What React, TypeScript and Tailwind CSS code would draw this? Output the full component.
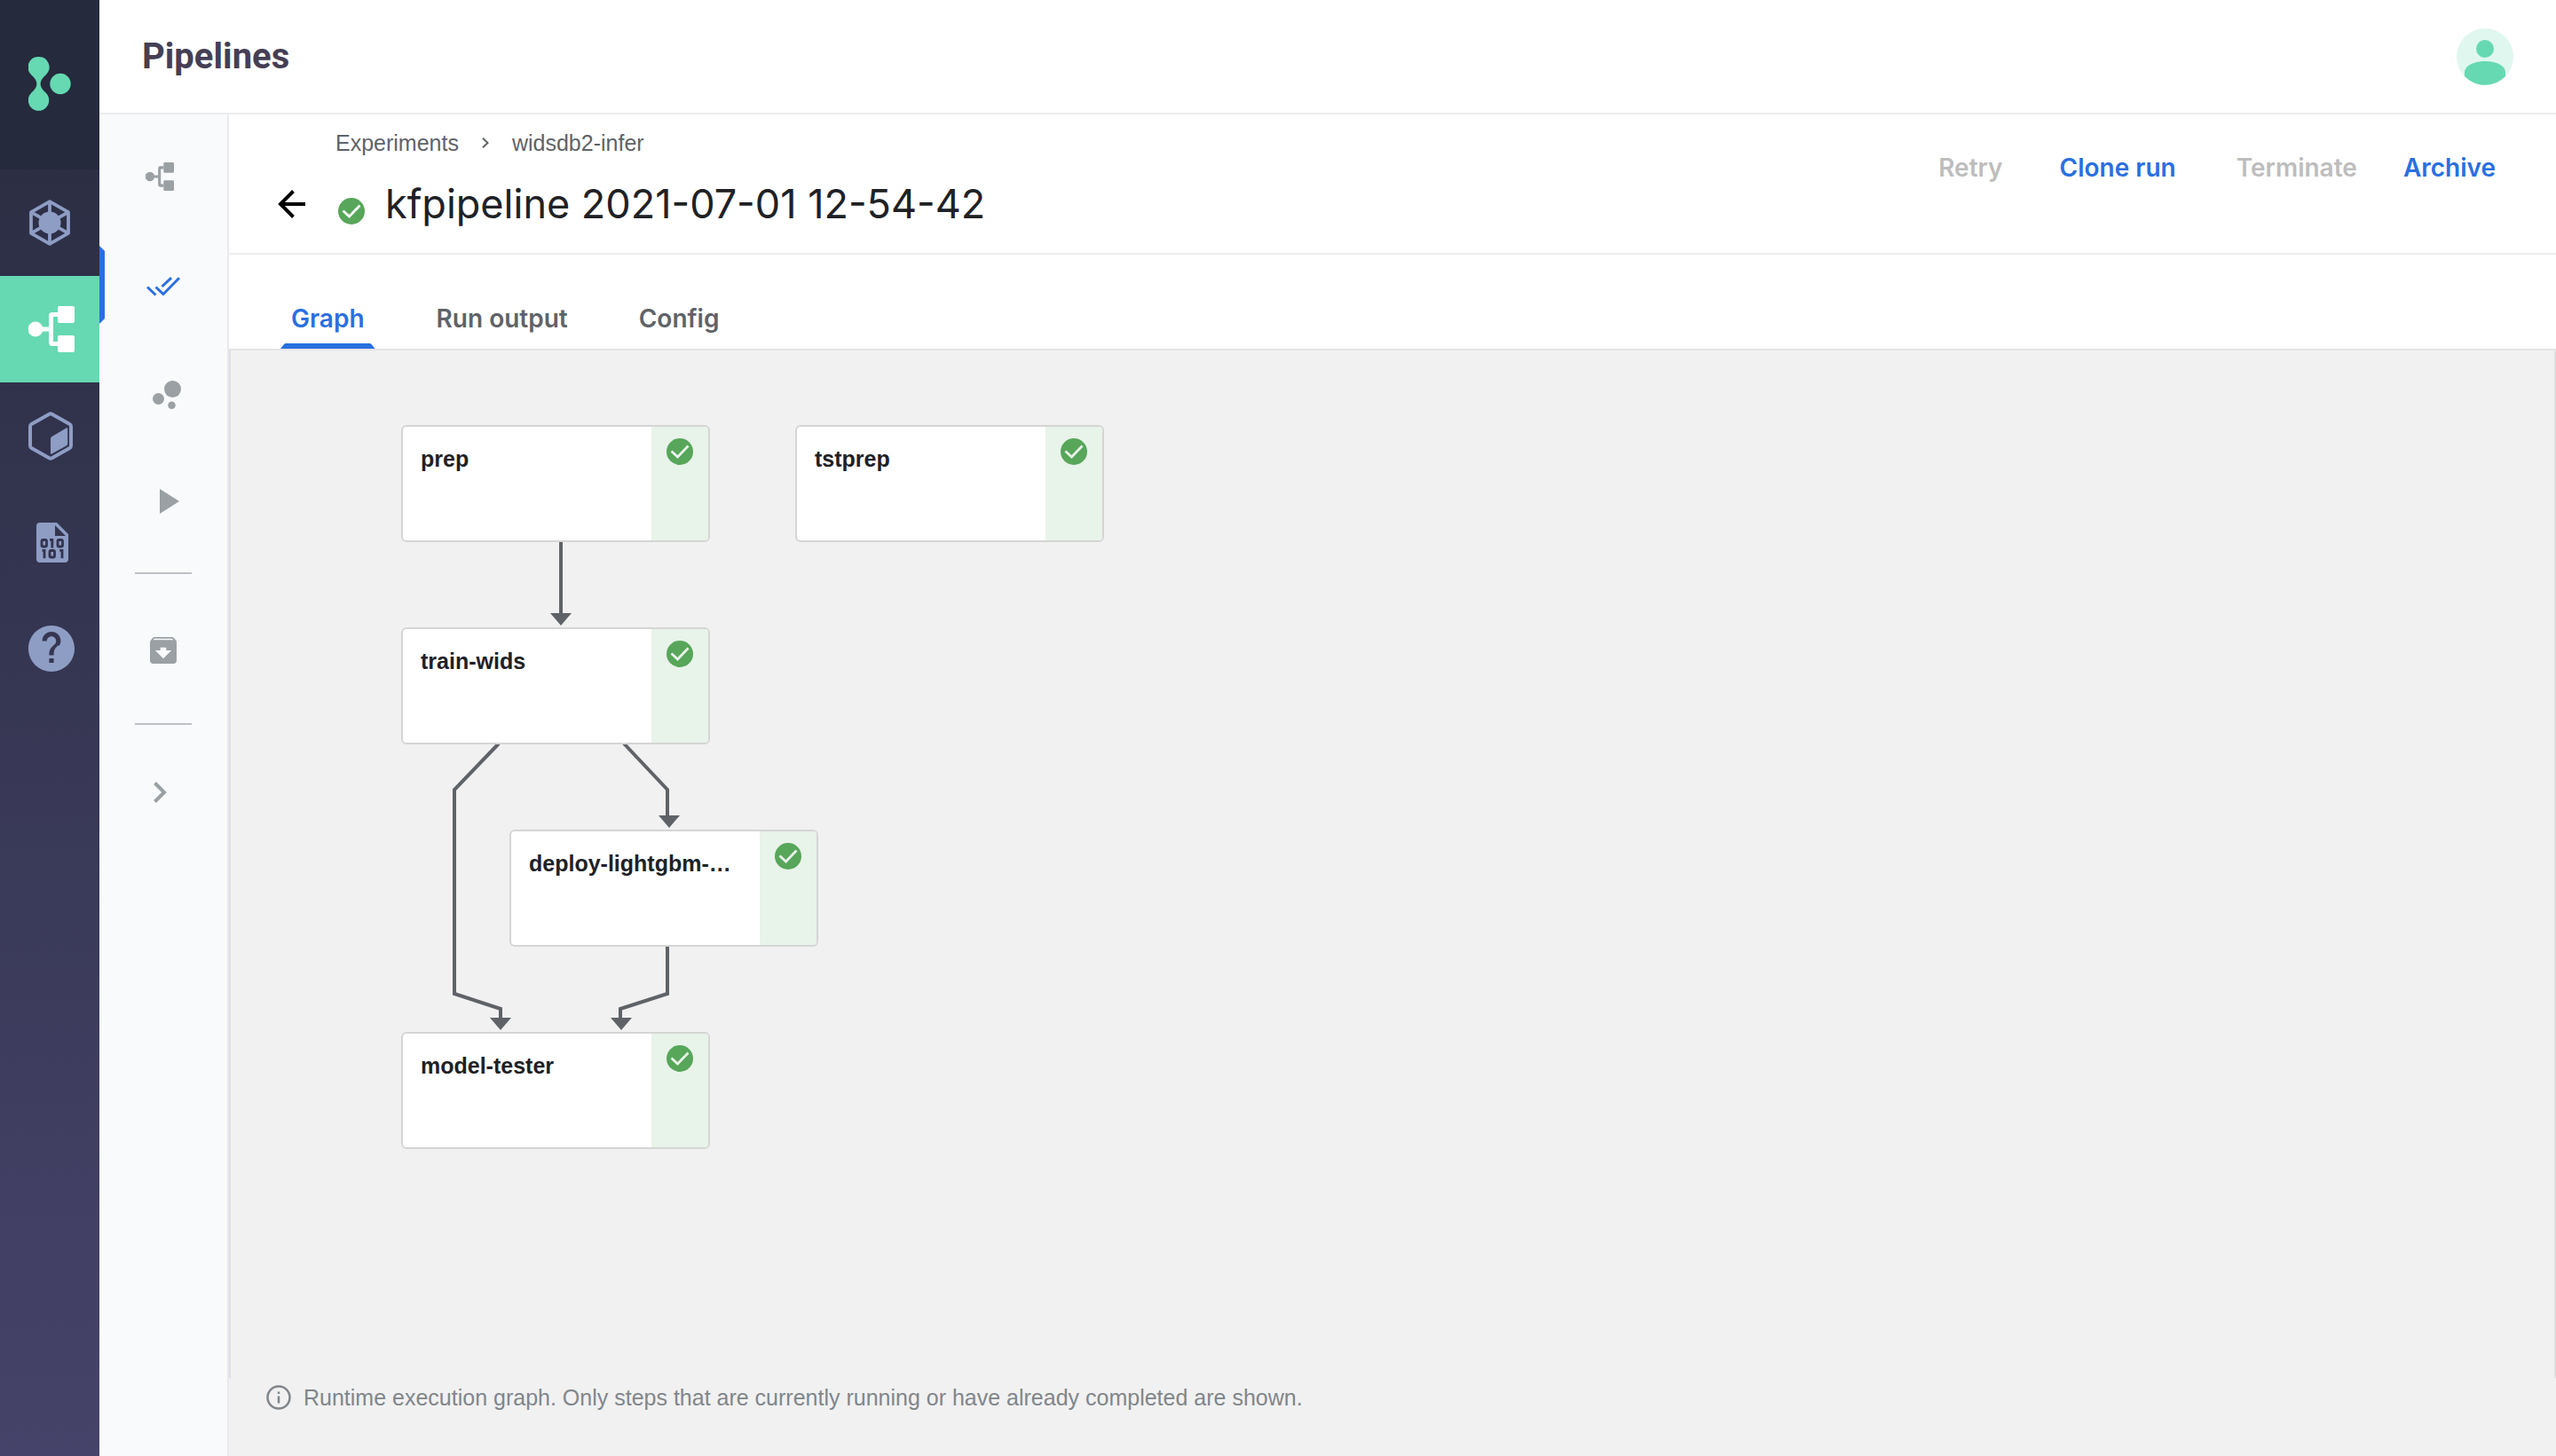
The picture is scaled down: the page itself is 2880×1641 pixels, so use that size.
import React from "react";

const helv = "font-['Liberation_Sans',Arial,sans-serif]";

function Flow({ className }: { className: string }) {
  return (
    <svg viewBox="0 0 52 52" className={className} fill="currentColor" aria-hidden="true">
      <circle cx="8" cy="26" r="8.5" />
      <path d="M14 23.500h9V11a4 4 0 0 1 4-4h6v5h-5v28h5v5h-6a4 4 0 0 1-4-4V28.500h-9z" />
      <rect x="33" y="0" width="19" height="19" rx="2" />
      <rect x="33" y="33" width="19" height="19" rx="2" />
    </svg>
  );
}

function Check({ tick }: { tick: string }) {
  return (
    <svg viewBox="0 0 30 30" className="size-[30px] shrink-0" role="img" aria-label="Succeeded">
      <circle cx="15" cy="15" r="15" fill="#57a65a" />
      <path d="M5.500 14.500l7 6.500L24.500 8.500" fill="none" stroke={tick} strokeWidth="2.800" />
    </svg>
  );
}

const navItem = "flex h-[120px] w-full items-center pl-8";

function MainNav() {
  return (
    <nav aria-label="Main" className="flex w-28 shrink-0 flex-col bg-linear-to-b from-[#292c40] to-[#46436a] text-[#8e9dc4]">
      <a href="#home" aria-label="Home" className="flex h-[191px] items-start bg-[#262a3d] pt-16 pl-8 text-[#66d9b2]">
        <svg viewBox="0 0 48 61" className="h-[61px] w-12" fill="currentColor">
          <path d="M11.500 0a11.700 11.700 0 0 1 8.500 20c-3 3-6.400 6-6.400 10.500S17 38 20 41a11.700 11.700 0 1 1-17 0c3-3 6.400-6 6.400-10.500S6 23 3 20a11.700 11.700 0 0 1 8.500-20z" />
          <circle cx="36" cy="30.500" r="11.700" />
        </svg>
      </a>
      <a href="#cluster" aria-label="Cluster" className={navItem}>
        <svg viewBox="0 0 48 52" className="h-[52px] w-12" fill="none" stroke="currentColor" strokeWidth="3.800">
          <path strokeLinejoin="round" d="M24 2.200L45 14.200V37.800L24 49.800L3 37.800V14.200z" />
          <path d="M24 2v48M3 14.200L45 37.800M45 14.200L3 37.800" />
          <circle cx="24" cy="26" r="12.500" fill="currentColor" stroke="none" />
        </svg>
      </a>
      <a href="#pipelines" aria-label="Pipelines" aria-current="page" className={navItem + " bg-[#66d9b2] text-white"}>
        <Flow className="size-[52px]" />
      </a>
      <a href="#models" aria-label="Models" className={navItem}>
        <svg viewBox="0 0 50 55" className="h-[55px] w-[50px]" fill="currentColor">
          <path fill="none" stroke="currentColor" strokeWidth="4" strokeLinejoin="round" d="M23.500 2.700a3 3 0 0 1 3 0L46.500 14a3 3 0 0 1 1.500 2.500v22a3 3 0 0 1-1.500 2.500L26.500 52.300a3 3 0 0 1-3 0L3.500 41a3 3 0 0 1-1.500-2.500v-22A3 3 0 0 1 3.500 14z" />
          <path d="M25 30.500a3 3 0 0 1 1.500-2.600L43 18.300q1.200-.5 1.200.8v17q0 1.500-1.200 2.200L26.300 47.500q-1.300.5-1.300-.8z" />
        </svg>
      </a>
      <a href="#artifacts" aria-label="Artifacts" className="flex h-[120px] w-full items-center pl-[41px]">
        <svg viewBox="0 0 36 45" className="h-[45px] w-9">
          <path fill="currentColor" fillRule="evenodd" d="M4 0h19l13 13v28a4 4 0 0 1-4 4H4a4 4 0 0 1-4-4V4a4 4 0 0 1 4-4zM21 3v12h12z" />
          <g fill="none" stroke="#33344f" strokeWidth="2.800">
            <rect x="6" y="19.500" width="5.500" height="7.500" rx="1.500" />
            <path d="M15 19.400h2.800v9M9 40.300v-9H6.500M29 40.300v-9h-2.800" />
            <rect x="24" y="19.500" width="5.500" height="7.500" rx="1.500" />
            <rect x="15" y="31.500" width="5.500" height="7.500" rx="1.500" />
          </g>
        </svg>
      </a>
      <a href="#help" aria-label="Help" className={navItem}>
        <svg viewBox="2 2 20 20" className="size-[52px]" fill="currentColor">
          <path d="M12 2C6.480 2 2 6.480 2 12s4.480 10 10 10 10-4.480 10-10S17.520 2 12 2zm1 16.200h-2v-2h2v2zm2.070-7.750l-.9.920C13.450 12.100 13 12.900 13 14.900h-2v-.7c0-1.100.45-2.100 1.170-2.830l1.240-1.260c.37-.36.590-.86.590-1.410 0-1.100-.9-2-2-2s-2 .9-2 2H8c0-2.210 1.790-4 4-4s4 1.790 4 4c0 .88-.36 1.680-.93 2.250z" />
        </svg>
      </a>
    </nav>
  );
}

function SubNav() {
  return (
    <nav aria-label="Pipelines" className="flex w-[146px] shrink-0 flex-col items-start border-r-2 border-[#e8e8ee] bg-[#f9fafc] pt-[26px] text-[#9aa0a4]">
      <a href="#all" aria-label="All pipelines" className="flex h-[88px] w-full items-center pl-[52px]">
        <Flow className="size-8" />
      </a>
      <a href="#runs" aria-label="Runs" aria-current="page" className="mt-[34px] flex h-[88px] w-full items-center text-[#2a6fe0]">
        <svg viewBox="0 0 6 88" className="h-[88px] w-1.5" fill="currentColor"><path d="M0 0l6 6v76l-6 6z" /></svg>
        <svg viewBox="0 0 38 22" className="mt-1 ml-[47px] h-[22px] w-[38px]" fill="none" stroke="currentColor" strokeWidth="3">
          <path d="M1 11.500l9.500 9M10.500 11.500l8.500 8L37 1.200M17.500 11L28 1.200" />
        </svg>
      </a>
      <a href="#experiments" aria-label="Experiments" className="mt-9 flex h-[88px] w-full items-center pl-15">
        <svg viewBox="0 0 32 32" className="size-8" fill="currentColor">
          <circle cx="22.500" cy="9.500" r="9.500" /><circle cx="6.500" cy="20.500" r="6.500" /><circle cx="21.500" cy="27.700" r="4.300" />
        </svg>
      </a>
      <a href="#jobs" aria-label="Jobs" className="mt-8 flex h-[88px] w-full items-center pl-[68px]">
        <svg viewBox="0 0 22 28" className="h-7 w-[22px]" fill="currentColor"><path d="M0 0l22 14L0 28z" /></svg>
      </a>
      <hr className="mt-9 ml-10 w-16 border-t-2 border-[#bdc0c6]" />
      <a href="#archive" aria-label="Archive" className="mt-[42px] flex h-[88px] w-full items-center pl-[57px]">
        <svg viewBox="3 3 18 18" className="size-[30px]" fill="currentColor">
          <path d="M20.540 5.230l-1.390-1.680C18.880 3.210 18.470 3 18 3H6c-.47 0-.88.210-1.160.55L3.460 5.230C3.170 5.570 3 6.020 3 6.500V19c0 1.100.9 2 2 2h14c1.100 0 2-.9 2-2V6.500c0-.48-.17-.93-.46-1.270zM12 17.500L6.500 12H10v-2h4v2h3.500L12 17.500zM5.120 5l.81-1h12l.94 1H5.120z" />
        </svg>
      </a>
      <hr className="mt-[38px] ml-10 w-16 border-t-2 border-[#bdc0c6]" />
      <button type="button" aria-label="Expand" className="mt-8 flex h-[88px] w-full items-center pl-[61px]">
        <svg viewBox="0 0 15 24" className="h-6 w-[15px]" fill="none" stroke="currentColor" strokeWidth="4"><path d="M1.500 1.500L12 12L1.500 22.500" /></svg>
      </button>
    </nav>
  );
}

const tabBase = "flex h-full flex-col items-center justify-between";

function Toolbar() {
  return (
    <header className="flex h-[158px] items-start justify-between border-b-2 border-[#ededee]">
      <div className="pt-4 pl-[55px]">
        <div className={"flex h-8 items-center pl-[65px] text-[25px] leading-8 text-[#5f6368] " + helv}>
          <a href="#experiments">Experiments</a>
          <svg viewBox="0 0 8 12" className="mx-[26px] h-3 w-2" fill="none" stroke="currentColor" strokeWidth="2"><path d="M1 .8L6.500 6L1 11.200" /></svg>
          <a href="#widsdb2-infer">widsdb2-infer</a>
        </div>
        <div className="mt-[21px] flex h-16 items-center">
          <button type="button" aria-label="Back" className="shrink-0">
            <svg viewBox="0 0 32 32" className="size-8" fill="none" stroke="#000" strokeWidth="4"><path d="M31 16H3M17.500 1.500L3 16L17.500 30.500" /></svg>
          </button>
          <span className="mt-4 ml-9"><Check tick="#fff" /></span>
          <h2 className="ml-[23px] font-['Inter',sans-serif] text-[45px] leading-16 whitespace-nowrap text-[#202124]">kfpipeline 2021-07-01 12-54-42</h2>
        </div>
      </div>
      <div className="flex items-center pt-10 pr-[68px] font-['Inter',sans-serif] text-[28px] leading-10 font-semibold text-[#2a6fe0]">
        <button type="button" disabled className="text-[#bdbdbd]">Retry</button>
        <button type="button" className="ml-16">Clone run</button>
        <button type="button" disabled className="ml-[68px] text-[#bdbdbd]">Terminate</button>
        <button type="button" className="ml-[52px]">Archive</button>
      </div>
    </header>
  );
}

const nodes = [
  { name: "prep", place: "left-[192px] top-[84px]" },
  { name: "tstprep", place: "left-[636px] top-[84px]" },
  { name: "train-wids", place: "left-[192px] top-[312px]" },
  { name: "deploy-lightgbm-…", place: "left-[314px] top-[540px]" },
  { name: "model-tester", place: "left-[192px] top-[768px]" },
];

function Graph() {
  return (
    <section aria-label="Graph" className="relative min-h-[1158px] flex-1 border-x-2 border-[#e0e0e0]">
      <svg viewBox="0 0 1000 920" className="absolute top-0 left-0 h-[920px] w-[1000px]" aria-hidden="true">
        <g fill="none" stroke="#5f6368" strokeWidth="4">
          <path d="M372 216V298" />
          <path d="M302 443L252 495V725L304 742V754" />
          <path d="M443 443L492 495V526" />
          <path d="M492 672V725L439 742V754" />
        </g>
        <g fill="#5f6368">
          <path d="M360 296h24l-12 14z" />
          <path d="M482 524h24l-12 14z" />
          <path d="M292 752h24l-12 14z" />
          <path d="M428 752h24l-12 14z" />
        </g>
      </svg>
      {nodes.map((n) => (
        <div key={n.name} className={"absolute flex h-[132px] w-[348px] overflow-hidden rounded-md border-2 border-[#d5d5d5] bg-white " + n.place}>
          <div className={"min-w-0 flex-1 pt-5 pl-5 text-[25px] leading-8 font-bold whitespace-nowrap text-[#202124] " + helv}>{n.name}</div>
          <div className="flex w-16 justify-center bg-[#e8f3e9] pt-[13px]"><Check tick="#e8f3e9" /></div>
        </div>
      ))}
    </section>
  );
}

export default function App() {
  return (
    <div className="flex min-h-screen bg-white">
      <MainNav />
      <div className="flex min-w-0 flex-1 flex-col">
        <header className="flex h-[129px] items-center justify-between border-b-2 border-[#ebecef] pr-12 pl-12">
          <h1 className="font-['Roboto',sans-serif] text-[40px] leading-12 font-bold text-[#453f55]">Pipelines</h1>
          <button type="button" aria-label="Account">
            <svg viewBox="0 0 64 64" className="size-16">
              <circle cx="32" cy="32" r="32" fill="#e0f7ef" />
              <circle cx="32" cy="23" r="10" fill="#66d9b2" />
              <path d="M9 49.500c0-7 9-12.500 23-12.500s23 5.500 23 12.500v4.500a32 32 0 0 1-46 0z" fill="#66d9b2" />
            </svg>
          </button>
        </header>
        <div className="flex flex-1">
          <SubNav />
          <main className="flex min-w-0 flex-1 flex-col">
            <Toolbar />
            <div role="tablist" className="flex h-[108px] items-stretch border-b-2 border-[#e4e4e4] pl-[58px] font-['Inter',sans-serif] text-[28px] leading-10 font-semibold text-[#5f6368]">
              <button type="button" role="tab" aria-selected="true" className={tabBase + " pt-[52px] text-[#2a6fe0]"}>
                <span className="px-3">Graph</span>
                <svg viewBox="0 0 106 6" preserveAspectRatio="none" className="h-1.5 w-full" fill="currentColor"><path d="M0 6l4-5q1-1 2-1h94q1 0 2 1l4 5z" /></svg>
              </button>
              <button type="button" role="tab" aria-selected="false" className={tabBase + " ml-[69px] pt-[52px]"}>Run output</button>
              <button type="button" role="tab" aria-selected="false" className={tabBase + " ml-20 pt-[52px]"}>Config</button>
            </div>
            <div className="flex flex-1 flex-col bg-[#f1f1f1]">
              <Graph />
              <footer className={"flex h-[88px] items-start pt-1.5 pl-[42px] text-[25px] leading-8 text-[#80868b] " + helv}>
                <svg viewBox="0 0 28 28" className="mt-0.5 mr-3.5 size-7" fill="none" stroke="currentColor" strokeWidth="2.500">
                  <circle cx="14" cy="14" r="12.500" /><path d="M14 12.500v8M14 7.500v2.500" />
                </svg>
                <p>Runtime execution graph. Only steps that are currently running or have already completed are shown.</p>
              </footer>
            </div>
          </main>
        </div>
      </div>
    </div>
  );
}
